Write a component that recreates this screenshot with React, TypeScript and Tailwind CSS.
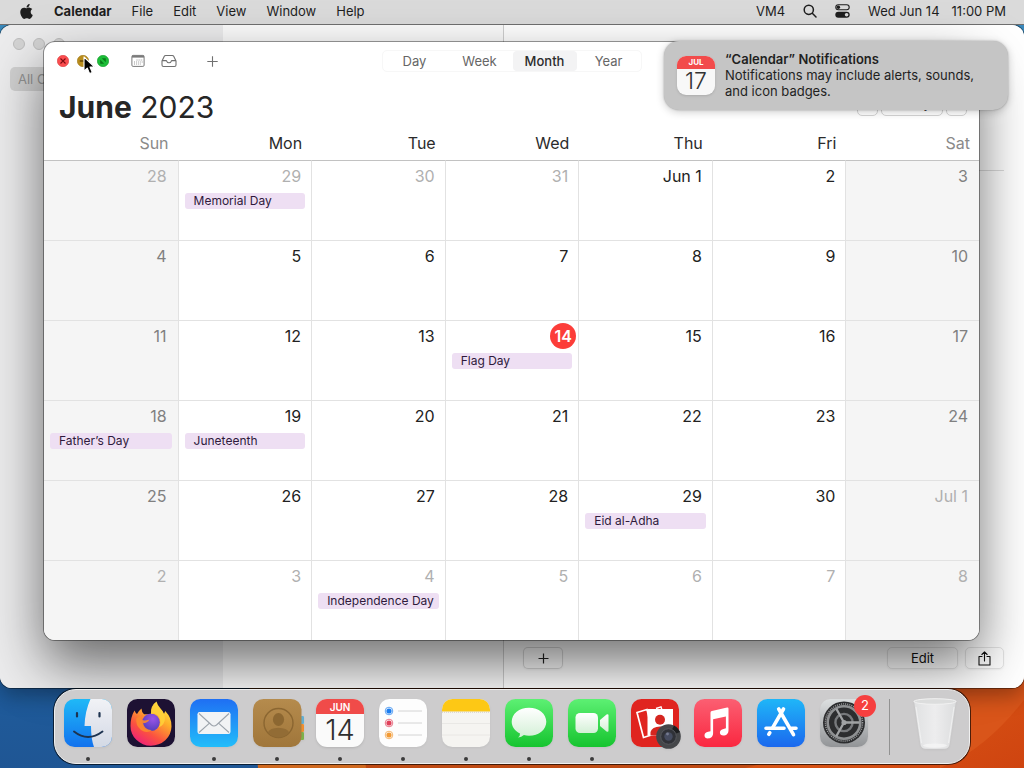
import type { ReactNode } from 'react';
import { FaApple } from 'react-icons/fa';

const weekdays = ['Sun', 'Mon', 'Tue', 'Wed', 'Thu', 'Fri', 'Sat'];

type Day = { label: string; outside?: boolean; today?: boolean; event?: string };

const out = (label: string, event?: string): Day => ({ label, outside: true, event });
const day = (label: string, event?: string): Day => ({ label, event });

const weeks: Day[][] = [
  [out('28'), out('29', 'Memorial Day'), out('30'), out('31'), day('Jun 1'), day('2'), day('3')],
  [day('4'), day('5'), day('6'), day('7'), day('8'), day('9'), day('10')],
  [day('11'), day('12'), day('13'), { label: '14', today: true, event: 'Flag Day' }, day('15'), day('16'), day('17')],
  [day('18', 'Father’s Day'), day('19', 'Juneteenth'), day('20'), day('21'), day('22'), day('23'), day('24')],
  [day('25'), day('26'), day('27'), day('28'), day('29', 'Eid al-Adha'), day('30'), out('Jul 1')],
  [out('2'), out('3'), out('4', 'Independence Day'), out('5'), out('6'), out('7'), out('8')],
];

function Wallpaper() {
  return (
    <svg className="absolute inset-0 h-full w-full" viewBox="0 0 1024 768" preserveAspectRatio="none" aria-hidden="true">
      <defs>
        <linearGradient id="wp-blue" x1="0" y1="0" x2="0" y2="1">
          <stop offset="0" stopColor="#3d8fc4" />
          <stop offset="0.9" stopColor="#1f5b9b" />
          <stop offset="1" stopColor="#1f5694" />
        </linearGradient>
        <linearGradient id="wp-orange" x1="0" y1="0" x2="1" y2="1">
          <stop offset="0" stopColor="#e2661a" />
          <stop offset="1" stopColor="#cf4410" />
        </linearGradient>
      </defs>
      <rect width="1024" height="768" fill="url(#wp-blue)" />
      <path d="M258 768 L240 600 L1024 560 V768 Z" fill="#d0691f" />
      <path d="M366 768 L350 640 L1024 600 V768 Z" fill="#bf4a13" />
      <path d="M745 768 Q860 740 1024 630 V768 Z" fill="url(#wp-orange)" />
      <path d="M940 640 H1024 V700 Q985 750 940 768 Z" fill="#d9551a" />
    </svg>
  );
}

function MenuBar() {
  const menus = ['File', 'Edit', 'View', 'Window', 'Help'];
  return (
    <header className="relative z-10 flex h-[25px] shrink-0 items-center justify-between border-b border-[#6f6f6f] bg-[#dadada] pr-[18px] pb-[2px] pl-[19px] text-[13px] leading-[22px] text-[#1e1e1e]">
      <nav className="flex items-center gap-5">
        <button aria-label="Apple menu" className="flex w-[15px] justify-center">
          <FaApple className="h-[17px] w-[17px] shrink-0" />
        </button>
        <button className="font-bold">Calendar</button>
        {menus.map((m) => (
          <button key={m}>{m}</button>
        ))}
      </nav>
      <div className="flex items-center gap-[18px]">
        <button>VM4</button>
        <button aria-label="Search">
          <svg className="h-[14px] w-[14px]" viewBox="0 0 14 14" fill="none" stroke="#1e1e1e" strokeWidth="1.5" strokeLinecap="round">
            <circle cx="5.8" cy="5.8" r="4.6" />
            <path d="M9.3 9.3 L13 13" />
          </svg>
        </button>
        <button aria-label="Control Center">
          <svg className="h-[14px] w-[15px]" viewBox="0 0 15 14">
            <rect x="0.8" y="0.8" width="13.4" height="5" rx="2.5" fill="none" stroke="#1e1e1e" strokeWidth="1.1" />
            <circle cx="3.4" cy="3.3" r="1.7" fill="#1e1e1e" />
            <rect x="0.3" y="7.7" width="14.4" height="6" rx="3" fill="#1e1e1e" />
            <circle cx="11.6" cy="10.7" r="1.8" fill="#dadada" />
          </svg>
        </button>
        <button className="flex gap-3">
          <span>Wed Jun 14</span>
          <span>11:00 PM</span>
        </button>
      </div>
    </header>
  );
}

function ContactsWindow() {
  return (
    <section
      aria-label="Contacts"
      className="absolute inset-x-0 top-[25px] bottom-20 flex overflow-hidden rounded-xl bg-white shadow-[0_0_0_1px_rgba(0,0,0,0.4),0_8px_20px_rgba(0,0,0,0.3)]"
    >
      <aside className="w-[223px] shrink-0 bg-[#ececed] px-[10px] pt-[13px]">
        <div className="flex gap-2 pl-[3px]">
          <span className="h-3 w-3 rounded-full border border-[#bdbdbd] bg-[#d4d4d4]" />
          <span className="h-3 w-3 rounded-full border border-[#bdbdbd] bg-[#d4d4d4]" />
          <span className="h-3 w-3 rounded-full border border-[#bdbdbd] bg-[#d4d4d4]" />
        </div>
        <div className="mt-[17px] h-6 rounded-[5px] bg-[#d0d0d0] px-2 text-[13px] leading-6 text-[#929292]">All Contacts</div>
      </aside>
      <div className="w-[281px] shrink-0 border-r border-[#cfcfcf] bg-[#fbfbfb]" />
      <main className="flex flex-1 flex-col justify-between bg-white pr-5 pb-[19px] pl-[19px]">
        <div className="mt-[145px] border-b border-[#dcdcdc]" />
        <div className="flex items-center justify-between">
          <button
            aria-label="Add"
            className="flex h-[22px] w-10 items-center justify-center rounded-[5px] border border-black/15 bg-white/10 shadow-xs"
          >
            <svg className="h-[11px] w-[11px]" viewBox="0 0 11 11" stroke="#222" strokeWidth="1.2">
              <path d="M5.5 0.5 V10.5 M0.5 5.5 H10.5" />
            </svg>
          </button>
          <div className="flex gap-[7px]">
            <button className="h-[22px] w-[71px] rounded-[5px] border border-black/10 text-[13px] leading-5 text-[#111] shadow-xs">
              Edit
            </button>
            <button
              aria-label="Share"
              className="flex h-[22px] w-[39px] items-center justify-center rounded-[5px] border border-black/10 shadow-xs"
            >
              <svg className="h-[15px] w-[13px]" viewBox="0 0 13 15" fill="none" stroke="#111" strokeWidth="1.1" strokeLinecap="round" strokeLinejoin="round">
                <path d="M4 5.5 H1 V14 H12 V5.5 H9 M6.5 10 V1 M3.9 3.5 L6.5 0.9 L9.1 3.5" />
              </svg>
            </button>
          </div>
        </div>
      </main>
    </section>
  );
}

function TrafficLights() {
  return (
    <div className="flex gap-2">
      <button aria-label="Close">
        <svg className="h-3 w-3" viewBox="0 0 12 12">
          <circle cx="6" cy="6" r="5.7" fill="#fb4d4f" stroke="#d93a3c" strokeWidth="0.6" />
          <path d="M3.5 3.5 L8.5 8.5 M8.5 3.5 L3.5 8.5" stroke="#7d0c10" strokeWidth="1.1" />
        </svg>
      </button>
      <button aria-label="Minimize">
        <svg className="h-3 w-3" viewBox="0 0 12 12">
          <circle cx="6" cy="6" r="5.7" fill="#b98d1c" stroke="#a07613" strokeWidth="0.6" />
          <path d="M2.8 6 H9.2" stroke="#5a3d00" strokeWidth="1.3" />
        </svg>
      </button>
      <button aria-label="Zoom">
        <svg className="h-3 w-3" viewBox="0 0 12 12">
          <circle cx="6" cy="6" r="5.7" fill="#1cbd38" stroke="#129a29" strokeWidth="0.6" />
          <path d="M4.8 3.2 H8.8 V7.2 Z M3.2 4.8 V8.8 H7.2 Z" fill="#0a7a1a" />
        </svg>
      </button>
    </div>
  );
}

function DayCell({ item, column }: { item: Day; column: number }) {
  const weekend = column === 0 || column === 6;
  const tone = item.outside ? 'text-[#b0b0b0]' : weekend ? 'text-[#808080]' : 'text-[#222222]';
  return (
    <td className={`h-20 border-t border-[#e2e2e2] p-0 align-top ${column > 0 ? 'border-l' : ''} ${weekend ? 'bg-[#f5f5f5]' : ''}`}>
      <div className={`mt-[2px] flex h-[26px] items-center justify-end text-base ${weekend ? 'pr-[11px]' : 'pr-[10px]'} ${tone}`}>
        {item.today ? (
          <span className="-mr-2 flex h-[26px] w-[26px] items-center justify-center rounded-full bg-[#fc3d39] font-semibold text-white">
            {item.label}
          </span>
        ) : (
          item.label
        )}
      </div>
      {item.event && (
        <div className="mx-[6px] mt-1 h-4 truncate rounded-[3px] bg-[#eedff3] pl-[9px] text-xs leading-4 text-[#2f1a3c]">{item.event}</div>
      )}
    </td>
  );
}

function CalendarWindow() {
  return (
    <section
      aria-label="Calendar"
      className="absolute top-[42px] right-[45px] bottom-32 left-11 z-20 flex flex-col rounded-[11px] bg-white shadow-[0_0_0_1px_rgba(0,0,0,0.38),0_24px_54px_rgba(0,0,0,0.56)]"
    >
      <div className="grid h-[38px] shrink-0 grid-cols-[1fr_auto_1fr] items-center px-[13px]">
        <div className="flex items-center">
          <TrafficLights />
          <button aria-label="Calendars" className="ml-[22px]">
            <svg className="h-[14px] w-[14px]" viewBox="0 0 14 14" fill="none" stroke="#7a7a7a">
              <rect x="0.9" y="1.4" width="12.2" height="11" rx="1.2" />
              <path d="M1 2.6 H13" strokeWidth="2" />
              <path d="M5.5 6 H12 M3 8 H12 M3 10 H10" strokeDasharray="1 1.1" strokeWidth="0.8" />
            </svg>
          </button>
          <button aria-label="Inbox" className="ml-4">
            <svg className="h-[14px] w-[16px]" viewBox="0 0 16 14" fill="none" stroke="#707070" strokeWidth="1.1" strokeLinejoin="round">
              <path d="M1 7 L3.3 2.3 Q3.7 1.5 4.6 1.5 H11.4 Q12.3 1.5 12.7 2.3 L15 7 V11 Q15 12.5 13.5 12.5 H2.5 Q1 12.5 1 11 Z" />
              <path d="M1 6.6 H5 Q5.6 6.6 5.8 7.3 Q6.3 8.8 8 8.8 Q9.7 8.8 10.2 7.3 Q10.4 6.6 11 6.6 H15" />
            </svg>
          </button>
          <button aria-label="New event" className="ml-[30px]">
            <svg className="h-[11px] w-[11px]" viewBox="0 0 11 11" stroke="#707070" strokeWidth="1.1">
              <path d="M5.5 0.3 V10.7 M0.3 5.5 H10.7" />
            </svg>
          </button>
        </div>
        <div className="flex h-[22px] rounded-[5px] border border-[#f7f7f7] text-[13px] leading-[18px] text-[#666]">
          <button className="w-16">Day</button>
          <button className="w-[66px]">Week</button>
          <button className="w-16 rounded-[4px] bg-[#f3f3f4] font-medium text-[#2c2c2c]">Month</button>
          <button className="w-16">Year</button>
        </div>
        <div />
      </div>
      <div className="flex h-[52px] shrink-0 items-center justify-between pr-3 pl-[15px]">
        <h1 className="pt-[2px] text-[30px] leading-10 text-[#262626]">
          <b className="font-bold">June</b> 2023
        </h1>
        <div className="flex gap-[3px] pb-[2px] text-[13px] leading-4 text-[#333]">
          <button aria-label="Previous month" className="h-[22px] w-[21px] rounded-[5px] border border-[#d4d4d4] pb-1">‹</button>
          <button className="h-[22px] w-[62px] rounded-[5px] border border-[#d4d4d4] pb-1">Today</button>
          <button aria-label="Next month" className="h-[22px] w-[21px] rounded-[5px] border border-[#d4d4d4] pb-1">›</button>
        </div>
      </div>
      <div className="flex-1 overflow-hidden rounded-b-[11px]">
        <table className="h-full w-full table-fixed border-separate border-spacing-0">
          <thead>
            <tr>
              {weekdays.map((name, i) => (
                <th
                  key={name}
                  scope="col"
                  className={`h-7 p-0 pr-[9px] text-right align-top text-base leading-[22px] font-normal ${i === 0 || i === 6 ? 'text-[#8a8a8a]' : 'text-[#2b2b2b]'}`}
                >
                  {name}
                </th>
              ))}
            </tr>
          </thead>
          <tbody className="[&>tr:first-child>td]:border-t-[#c2c2c2]">
            {weeks.map((week, w) => (
              <tr key={w}>
                {week.map((item, i) => (
                  <DayCell key={i} item={item} column={i} />
                ))}
              </tr>
            ))}
          </tbody>
        </table>
      </div>
    </section>
  );
}

function Notification() {
  return (
    <aside className="absolute top-[41px] right-4 z-30 flex h-[69px] w-[344px] items-center gap-[10px] rounded-[15px] bg-[#c5c5c5] px-[13px] text-[13px] leading-4 text-[#1f1f1f] shadow-[0_0_2px_rgba(0,0,0,0.3),0_2px_8px_rgba(0,0,0,0.2)]">
      <div className="flex h-[39px] w-[38px] shrink-0 flex-col overflow-hidden rounded-[9px] bg-[#f8f8f8] text-center shadow-sm">
        <span className="h-[13px] shrink-0 bg-[#f24b4b] text-[8px] leading-[13px] font-bold text-white">JUL</span>
        <span className="text-[23px] leading-6 font-light text-[#333]">17</span>
      </div>
      <div className="pb-[2px]">
        <p className="font-semibold">“Calendar” Notifications</p>
        <p>Notifications may include alerts, sounds, and icon badges.</p>
      </div>
    </aside>
  );
}

function Pointer() {
  return (
    <svg className="pointer-events-none absolute top-14 left-[83px] z-40 h-[19px] w-[13px]" viewBox="0 0 13 19" aria-hidden="true">
      <path d="M1 1 V15.2 L4.3 12.1 L6.6 17.6 L9.3 16.5 L7 11.1 H11.6 Z" fill="#000" stroke="#fff" strokeWidth="1.1" strokeLinejoin="round" />
    </svg>
  );
}

const Art = ({ children }: { children: ReactNode }) => (
  <svg className="h-12 w-12 overflow-visible drop-shadow-xs" viewBox="0 0 48 48" aria-hidden="true">
    {children}
  </svg>
);

const Finder = () => (
  <Art>
    <defs>
      <linearGradient id="fi-l" x1="0" y1="0" x2="0" y2="1">
        <stop offset="0" stopColor="#1fb9f7" />
        <stop offset="1" stopColor="#1272ee" />
      </linearGradient>
      <linearGradient id="fi-r" x1="0" y1="0" x2="0" y2="1">
        <stop offset="0" stopColor="#f1f2f6" />
        <stop offset="1" stopColor="#d3d9e5" />
      </linearGradient>
      <clipPath id="fi-c">
        <rect width="48" height="48" rx="10.5" />
      </clipPath>
    </defs>
    <g clipPath="url(#fi-c)">
      <rect width="48" height="48" fill="url(#fi-l)" />
      <path d="M26.5 0 Q21 12 20.5 27 H27 Q27 40 30 48 H48 V0 Z" fill="url(#fi-r)" />
    </g>
    <path d="M13 14 V17.5 M35.5 14 V17.5" stroke="#1d3350" strokeWidth="2.2" strokeLinecap="round" />
    <path d="M10 32.5 Q24 43.5 38.5 32.5" fill="none" stroke="#1d3350" strokeWidth="1.9" strokeLinecap="round" />
  </Art>
);

const Firefox = () => (
  <Art>
    <defs>
      <linearGradient id="ff-a" x1="0.85" y1="0" x2="0.25" y2="1">
        <stop offset="0" stopColor="#fff14a" />
        <stop offset="0.35" stopColor="#ffb02a" />
        <stop offset="0.7" stopColor="#fb5240" />
        <stop offset="1" stopColor="#ee1e7c" />
      </linearGradient>
      <radialGradient id="ff-b" cx="0.6" cy="0.3" r="0.8">
        <stop offset="0" stopColor="#9a55e8" />
        <stop offset="1" stopColor="#4a3bb5" />
      </radialGradient>
    </defs>
    <rect width="48" height="48" rx="10.5" fill="#1d1133" />
    <path
      d="M3.5 27 Q3.5 18 7.5 11.5 Q8.5 14 10 15 Q12 11.5 14.5 9.5 Q14.5 13 17 15.2 H24 Q24 7 29.5 2.5 Q30.5 6.5 33.5 9.5 Q36 12 37 15 L38.2 12 Q45 19 44.5 27.5 A20.5 19.5 0 0 1 3.5 27 Z"
      fill="url(#ff-a)"
    />
    <circle cx="24" cy="23.3" r="8.8" fill="url(#ff-b)" />
    <path d="M17 15 Q13.5 17.8 15 21 Q18 22 22.5 20.5 Q20.5 24.3 16 24.3 Q18 31.5 25 31 Q20 35 14 31 Q8 26 9.5 19 Z" fill="#fd8a2c" opacity="0.9" />
    <path d="M24 15 Q29 13 32 18 Q35 24 31.5 28.5 Q38 26 38 19 Q37 12 31 8 Q27 4 29.5 2.5 Q23 7 24 15 Z" fill="#ffd23a" opacity="0.85" />
  </Art>
);

const Mail = () => (
  <Art>
    <defs>
      <linearGradient id="ml" x1="0" y1="0" x2="0" y2="1">
        <stop offset="0" stopColor="#1f6ff3" />
        <stop offset="1" stopColor="#22bdfa" />
      </linearGradient>
    </defs>
    <rect width="48" height="48" rx="10.5" fill="url(#ml)" />
    <rect x="7.5" y="13" width="33" height="22" rx="2.2" fill="#f1f3f5" />
    <path d="M9 14.5 L21.5 26 Q24 28 26.5 26 L39 14.5 M9 33.5 L19.5 24.2 M39 33.5 L28.5 24.2" fill="none" stroke="#9ba3ab" strokeWidth="1.1" />
  </Art>
);

const Contacts = () => (
  <Art>
    <defs>
      <linearGradient id="ct" x1="0" y1="0" x2="0" y2="1">
        <stop offset="0" stopColor="#b58b4d" />
        <stop offset="1" stopColor="#a0763a" />
      </linearGradient>
    </defs>
    <rect x="44" y="17" width="7" height="8" rx="1.2" fill="#62aed2" />
    <rect x="44" y="25" width="7" height="8" rx="1.2" fill="#ef8d2e" />
    <rect x="44" y="33" width="7" height="8" rx="1.2" fill="#7cb04b" />
    <rect width="48.5" height="48" rx="10.5" fill="url(#ct)" />
    <circle cx="25.5" cy="24" r="14.5" fill="none" stroke="#8b6631" strokeWidth="1.4" />
    <ellipse cx="25.5" cy="20.5" rx="5.6" ry="6.4" fill="#8c6731" />
    <path d="M14.7 33.6 Q17 29 25.5 28.8 Q34 29 36.3 33.6 Q32 38.2 25.5 38.4 Q19 38.2 14.7 33.6 Z" fill="#926c35" />
  </Art>
);

const CalendarIcon = () => (
  <div className="flex h-12 w-12 flex-col overflow-hidden rounded-[11px] bg-[#fafafa] text-center shadow-sm">
    <span className="h-[15px] shrink-0 bg-[#f04b49] text-[10px] leading-[17px] font-semibold text-white">JUN</span>
    <span className="text-[29px] leading-[31px] font-light text-[#2f2f2f]">14</span>
  </div>
);

const Reminders = () => (
  <Art>
    <rect width="48" height="48" rx="10.5" fill="#fdfdfd" />
    {[
      { y: 12, c: '#1b7df0' },
      { y: 24, c: '#e0405a' },
      { y: 36, c: '#f29a35' },
    ].map((r) => (
      <g key={r.y}>
        <circle cx="10" cy={r.y} r="3.8" fill="none" stroke={r.c} strokeOpacity="0.7" strokeWidth="1" />
        <circle cx="10" cy={r.y} r="2.6" fill={r.c} />
        <path d={`M19 ${r.y} H43`} stroke="#cfcfcf" strokeWidth="0.9" />
      </g>
    ))}
  </Art>
);

const Notes = () => (
  <Art>
    <defs>
      <clipPath id="nt">
        <rect width="48" height="48" rx="10.5" />
      </clipPath>
    </defs>
    <g clipPath="url(#nt)">
      <rect width="48" height="48" fill="#f5f4f1" />
      <rect width="48" height="12.5" fill="#fdc815" />
      <path d="M0 13.2 H48" stroke="#c9c4b6" strokeWidth="0.8" strokeDasharray="1 1" />
      <path d="M0 24.5 H48 M0 36 H48" stroke="#e6e5e2" strokeWidth="0.8" />
    </g>
  </Art>
);

const GreenTile = () => (
  <>
    <defs>
      <linearGradient id="gr" x1="0" y1="0" x2="0" y2="1">
        <stop offset="0" stopColor="#5df073" />
        <stop offset="1" stopColor="#16c42f" />
      </linearGradient>
      <linearGradient id="gw" x1="0" y1="0" x2="0" y2="1">
        <stop offset="0" stopColor="#ffffff" />
        <stop offset="1" stopColor="#d3f0d6" />
      </linearGradient>
    </defs>
    <rect width="48" height="48" rx="10.5" fill="url(#gr)" />
  </>
);

const Messages = () => (
  <Art>
    <GreenTile />
    <path d="M24 8.7 C33.8 8.7 41.3 14.8 41.3 22.7 C41.3 30.6 33.8 36.7 24 36.7 C22.2 36.7 20.5 36.5 18.9 36.1 Q16.5 38.4 13 38.6 Q15.3 36.8 15 34.4 C9.8 31.9 6.7 27.7 6.7 22.7 C6.7 14.8 14.2 8.7 24 8.7 Z" fill="url(#gw)" />
  </Art>
);

const FaceTime = () => (
  <Art>
    <GreenTile />
    <rect x="7.5" y="14" width="22.5" height="20" rx="4.5" fill="url(#gw)" />
    <path d="M32 21 L38.5 15.6 Q40.5 14.4 40.5 16.6 V31.4 Q40.5 33.6 38.5 32.4 L32 27 Z" fill="url(#gw)" />
  </Art>
);

const PhotoBooth = () => (
  <Art>
    <rect width="48" height="48" rx="10.5" fill="#e0241f" />
    <path d="M6 13.5 L16 10.5 L22 35.5 L12.5 38.5 Z" fill="none" stroke="#fff" strokeWidth="1.7" />
    <path d="M25 9.5 L30 7.8 L30.8 10.5" fill="none" stroke="#fff" strokeWidth="1.4" />
    <rect x="16.5" y="10" width="25.5" height="26.5" fill="#fff" />
    <circle cx="29" cy="20.7" r="5" fill="#d52620" />
    <path d="M19.5 36.5 V33 Q21 27.6 29 27.4 Q37 27.6 39 33 V36.5 Z" fill="#d52620" />
    <circle cx="37.5" cy="37.5" r="12.3" fill="#45474a" />
    <path d="M37.5 37.5 L43 26.5 A12.3 12.3 0 0 1 49 33 Z" fill="#1d1e20" />
    <circle cx="37.5" cy="37.5" r="7.8" fill="#303238" stroke="#55575c" strokeWidth="1" />
    <circle cx="37.5" cy="37.5" r="4.2" fill="#464c60" />
    <circle cx="36.5" cy="35" r="1.4" fill="#757b90" />
  </Art>
);

const Music = () => (
  <Art>
    <defs>
      <linearGradient id="mu" x1="0" y1="0" x2="0" y2="1">
        <stop offset="0" stopColor="#fb5f72" />
        <stop offset="1" stopColor="#fa2740" />
      </linearGradient>
    </defs>
    <rect width="48" height="48" rx="10.5" fill="url(#mu)" />
    <path d="M18 14 Q18 12.6 19.4 12.3 L34.6 8.9 Q36 8.6 36 10 V31.5 C36 35.2 33.5 36.9 30.9 36.9 C28.7 36.9 27.4 35.6 27.4 33.8 C27.4 31.8 28.8 30.6 31 30.2 L33.4 29.6 V17.8 L20.6 20.6 V34.6 C20.6 38.2 18 39.8 15.4 39.8 C13.3 39.8 12 38.6 12 36.8 C12 34.8 13.4 33.6 15.6 33.1 L18 32.5 Z" transform="translate(-1.5 -0.3)" fill="#fff" />
  </Art>
);

const AppStore = () => (
  <Art>
    <defs>
      <linearGradient id="as" x1="0" y1="0" x2="0" y2="1">
        <stop offset="0" stopColor="#1fb6f8" />
        <stop offset="1" stopColor="#1b68ee" />
      </linearGradient>
    </defs>
    <rect width="48" height="48" rx="10.5" fill="url(#as)" />
    <g stroke="#fff" strokeWidth="3.6" strokeLinecap="round" fill="none">
      <path d="M26.5 10 L15.7 28.7 M12.8 33.7 L11.8 35.3" />
      <path d="M21.7 10 L36.5 35.6" />
      <path d="M9 29.2 H27 M34.5 29.2 H39" />
    </g>
  </Art>
);

const Settings = () => (
  <Art>
    <defs>
      <linearGradient id="st" x1="0" y1="0" x2="0" y2="1">
        <stop offset="0" stopColor="#dde0e1" />
        <stop offset="1" stopColor="#929497" />
      </linearGradient>
    </defs>
    <rect width="48" height="48" rx="10.5" fill="url(#st)" />
    <circle cx="24" cy="23.5" r="21" fill="#2c2d2f" />
    <circle cx="24" cy="23.5" r="18.6" fill="none" stroke="#9a9c9e" strokeWidth="1.4" strokeDasharray="1.1 1" />
    <circle cx="24" cy="23.5" r="16.3" fill="none" stroke="#8e9092" strokeWidth="2.6" />
    <circle cx="24" cy="23.5" r="8.6" fill="none" stroke="#77797c" strokeWidth="2.4" />
    <path d="M24 23.5 L16.3 9.7 M24 23.5 H39.5 M24 23.5 L16.3 37.3" stroke="#a0a2a4" strokeWidth="2.3" />
    <circle cx="24" cy="23.5" r="2.6" fill="#a0a2a4" />
  </Art>
);

const Trash = () => (
  <Art>
    <defs>
      <linearGradient id="tr" x1="0" y1="0" x2="1" y2="0">
        <stop offset="0" stopColor="#e0e1e2" />
        <stop offset="0.5" stopColor="#ededee" />
        <stop offset="1" stopColor="#dcddde" />
      </linearGradient>
    </defs>
    <path d="M3 1.5 H45 L38.6 45 Q38 49.7 33.5 49.7 H14.5 Q10 49.7 9.4 45 Z" fill="url(#tr)" />
    <ellipse cx="24" cy="2.5" rx="21" ry="2.8" fill="#dcdddd" stroke="#f2f2f2" strokeWidth="1" />
    <path d="M5 8 L10.5 44 M43 8 L37.5 44" stroke="#f6f6f6" strokeWidth="1" opacity="0.7" />
    <ellipse cx="24" cy="46.5" rx="12" ry="2" fill="#f7f7f7" opacity="0.7" />
  </Art>
);

const dockApps: { name: string; art: ReactNode; running?: boolean; badge?: string }[] = [
  { name: 'Finder', art: <Finder />, running: true },
  { name: 'Firefox', art: <Firefox /> },
  { name: 'Mail', art: <Mail />, running: true },
  { name: 'Contacts', art: <Contacts />, running: true },
  { name: 'Calendar', art: <CalendarIcon />, running: true },
  { name: 'Reminders', art: <Reminders />, running: true },
  { name: 'Notes', art: <Notes />, running: true },
  { name: 'Messages', art: <Messages />, running: true },
  { name: 'FaceTime', art: <FaceTime />, running: true },
  { name: 'Photo Booth', art: <PhotoBooth /> },
  { name: 'Music', art: <Music /> },
  { name: 'App Store', art: <AppStore /> },
  { name: 'System Settings', art: <Settings />, badge: '2' },
];

function Dock() {
  return (
    <footer className="relative z-30 mx-auto mt-auto mb-1 flex h-[75px] items-start rounded-[22px] border border-[#f0f0f0] bg-[#cdcccd] pt-[9px] pr-[10px] pl-[9px] shadow-[0_0_0_1px_rgba(0,0,0,0.65)]">
      <div className="flex gap-[15px]">
        {dockApps.map((app) => (
          <button key={app.name} aria-label={app.name} className="relative flex w-12 flex-col items-center gap-[10px]">
            {app.art}
            {app.running && <span className="h-1 w-1 rounded-full bg-[#3b3b3b]" />}
            {app.badge && (
              <span className="absolute -top-1 -right-2 flex h-[22px] w-[22px] items-center justify-center rounded-full bg-[#f63f3f] text-[13px] text-white">
                {app.badge}
              </span>
            )}
          </button>
        ))}
      </div>
      <span className="mx-[21px] -mt-2 h-14 w-px self-center bg-[#929292]" />
      <button aria-label="Trash" className="flex w-12 justify-center">
        <Trash />
      </button>
    </footer>
  );
}

export default function App() {
  return (
    <div className="relative flex h-screen min-h-[700px] flex-col overflow-hidden font-[Inter,'Liberation_Sans',sans-serif]">
      <Wallpaper />
      <MenuBar />
      <ContactsWindow />
      <CalendarWindow />
      <Notification />
      <Pointer />
      <Dock />
    </div>
  );
}
